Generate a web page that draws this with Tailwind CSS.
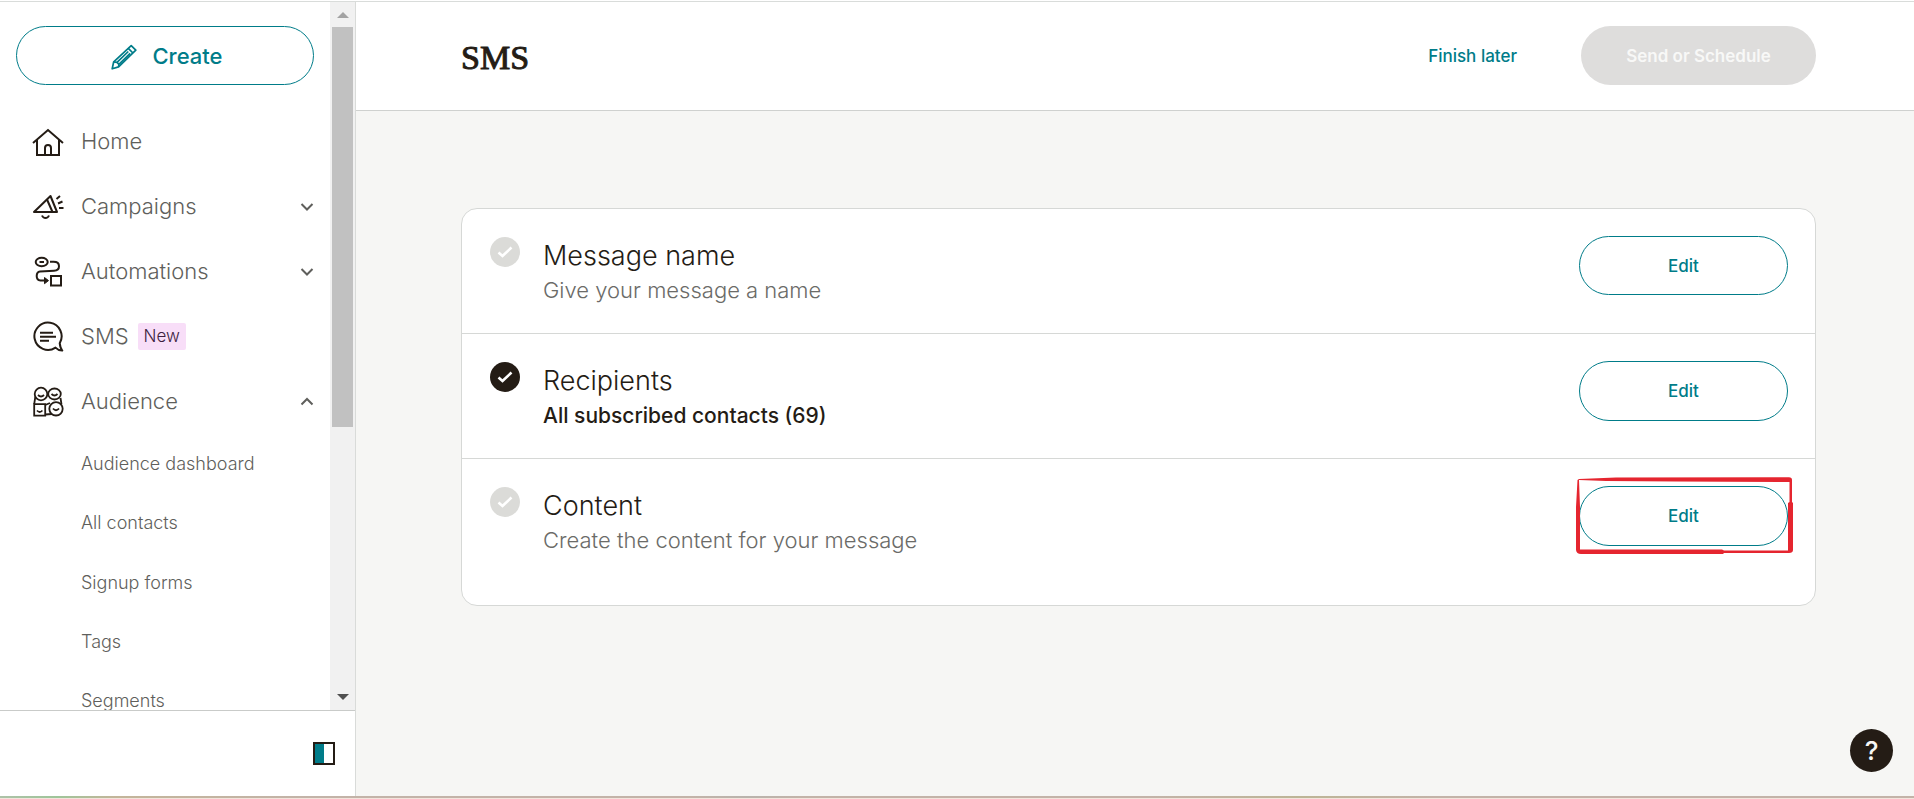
<!DOCTYPE html>
<html lang="en">
<head>
<meta charset="utf-8">
<meta name="viewport" content="width=device-width, initial-scale=1">
<title>SMS</title>
<script src="https://cdn.jsdelivr.net/npm/@tailwindcss/browser@4"></script>
</head>
<body class="flex h-screen flex-col overflow-hidden bg-white font-['Inter','Liberation_Sans',sans-serif] text-[#241c15]">
<div class="mt-px flex min-h-0 flex-1 border-t border-[#d9dcda]">

  <aside class="flex w-[356px] shrink-0 flex-col border-r border-[#d9dbd9]">
    <div class="flex min-h-0 flex-1">
      <div class="min-w-0 flex-1 overflow-hidden pt-6 pr-4 pl-4">
        <button type="button" class="flex h-[59px] w-full items-center justify-center gap-[15px] rounded-full border border-[#007c89] pt-0.5 pl-1 text-[22px] font-medium text-[#007c89]">
          <svg class="size-[26px]" viewBox="0 0 26 26" fill="none" stroke="currentColor" stroke-width="1.7" stroke-linejoin="round"><path d="M1.2 24.8 2.7 17.8 20.2 1.6 24.8 6.2 7.6 22.9Z"/><path d="M17.3 4.3 21.9 9M6 18.4 17.3 7.5M7.9 20.3 19.2 9.4M2.7 17.8 6 18.4 7.9 20.3 7.6 22.9"/></svg>
          Create
        </button>
        <nav class="mt-6 text-[22px] font-light text-[#5f5f5c]">
          <ul class="flex flex-col">
            <li><a href="#" class="flex h-[65px] items-center gap-[17px] pl-4">
              <svg class="size-8 shrink-0 text-[#241c15]" viewBox="0 0 32 32" fill="none" stroke="currentColor" stroke-width="2"><path d="M1 17 16 4 31 17M5 14V29H27V14M13 29V22Q13 19 16 19T19 22V29"/></svg>
              Home</a></li>
            <li><a href="#" class="flex h-[65px] items-center gap-[17px] pl-4">
              <svg class="size-8 shrink-0 text-[#241c15]" viewBox="0 0 32 32" fill="none" stroke="currentColor" stroke-width="2" stroke-linejoin="round"><path d="M2 21 18.5 5 25 21Z"/><path d="M15 8.5 20.5 21M10 24.5Q11 27 13.5 27T17 24.5M24.5 8 28 5M26 12.5 30.5 10.5M27 17H31.5"/></svg>
              <span class="flex-1">Campaigns</span>
              <svg class="h-4 w-3.5" viewBox="0 0 14 16" fill="none" stroke="currentColor" stroke-width="2"><path d="M1.5 5 7 10.500 12.500 5"/></svg></a></li>
            <li><a href="#" class="flex h-[65px] items-center gap-[17px] pl-4">
              <svg class="size-8 shrink-0 text-[#241c15]" viewBox="0 0 32 32" fill="none" stroke="currentColor" stroke-width="2"><ellipse cx="9.700" cy="6" rx="6" ry="4.200"/><path d="M7.500 6H12M18 5.800H21.500Q27 5.800 27 10.200T22 14.700L8 15.400Q4.700 15.800 4.700 20T8.500 24.600H13M19 20H29V29.400H19Z"/><path d="M12.500 21.500 16.500 24.600 12.500 27.700Z" fill="currentColor" stroke-width="1"/></svg>
              <span class="flex-1">Automations</span>
              <svg class="h-4 w-3.5" viewBox="0 0 14 16" fill="none" stroke="currentColor" stroke-width="2"><path d="M1.500 5 7 10.500 12.500 5"/></svg></a></li>
            <li><a href="#" class="flex h-[65px] items-center gap-[17px] pl-4">
              <svg class="size-8 shrink-0 text-[#241c15]" viewBox="0 0 32 32" fill="none" stroke="currentColor" stroke-width="2" stroke-linejoin="round"><path d="M23.500 26.600A13.600 13.600 0 1 1 27.700 22.200Q28.300 27.500 30.300 29.600 26.500 29.700 23.500 26.600Z"/><path d="M8 11.700H21M8 15.700H24M8 19.700H17"/></svg>
              <span>SMS</span><span class="-ml-2 rounded-[2px] bg-[#f8def8] px-1.5 text-[17px] leading-[27px] text-[#3d1f3f]">New</span></a></li>
            <li><a href="#" class="flex h-[65px] items-center gap-[17px] pl-4">
              <svg class="size-8 shrink-0 text-[#241c15]" viewBox="0 0 32 32" fill="none" stroke="currentColor" stroke-width="1.800"><circle cx="9" cy="8" r="6.300"/><ellipse cx="22.500" cy="8" rx="6.300" ry="5.500"/><path d="M2.200 18.200H13.200V29.600H2.200Z"/><circle cx="24" cy="22.800" r="6.700"/><path d="M3.300 11 2.200 18.200M28.500 12 29.500 18.500M13.200 28.500 20 28M13.200 19 18 17M6 9Q9 12 12 9M19.500 8Q22.500 11 25.500 8M5 24.500Q7.700 27.500 10.400 24.500M21 22.500Q24 26 27 22.500"/></svg>
              <span class="flex-1">Audience</span>
              <svg class="h-4 w-3.5" viewBox="0 0 14 16" fill="none" stroke="currentColor" stroke-width="2"><path d="M1.500 10.500 7 5 12.500 10.500"/></svg></a>
              <ul class="text-[18px]">
                <li><a href="#" class="flex h-[59px] items-center pl-[65px]">Audience dashboard</a></li>
                <li><a href="#" class="flex h-[59px] items-center pl-[65px]">All contacts</a></li>
                <li><a href="#" class="flex h-[60px] items-center pl-[65px]">Signup forms</a></li>
                <li><a href="#" class="flex h-[59px] items-center pl-[65px]">Tags</a></li>
                <li><a href="#" class="flex h-[59px] items-center pl-[65px]">Segments</a></li>
              </ul>
            </li>
          </ul>
        </nav>
      </div>
      <div class="flex w-[25px] flex-col items-center bg-[#f1f1f1]" aria-hidden="true">
        <svg class="h-[25px] w-3 text-[#a3a3a3]" viewBox="0 0 12 25" fill="currentColor"><path d="M0 16 6 10 12 16Z"/></svg>
        <div class="h-[400px] w-[21px] bg-[#c1c1c1]"></div>
        <svg class="mt-auto h-[25px] w-3 text-[#505050]" viewBox="0 0 12 25" fill="currentColor"><path d="M0 9 6 15 12 9Z"/></svg>
      </div>
    </div>
    <div class="flex h-[86px] items-center justify-end border-t border-[#c9cbc9] pr-5">
      <button type="button" aria-label="Collapse navigation" class="flex h-[23px] w-[22px] border-2 border-[#241c15] bg-white"><span class="h-full w-1/2 bg-[#007c89]"></span></button>
    </div>
  </aside>

  <div class="flex min-w-0 flex-1 flex-col bg-[#f6f6f4]">
    <header class="flex h-[109px] shrink-0 items-center border-b border-[#cfd1cf] bg-white pr-[98px] pb-0.5 pl-[105px]">
      <h1 class="flex-1 pt-1 font-['Liberation_Serif',serif] text-[34px] [-webkit-text-stroke:1px_#241c15]">SMS</h1>
      <a href="#" class="mr-16 pt-1 text-[17px] font-medium text-[#007c89]">Finish later</a>
      <button type="button" disabled class="h-[59px] w-[235px] rounded-full bg-[#dedddc] pt-1 text-[17px] font-semibold text-[#f8f8f7]">Send or Schedule</button>
    </header>
    <main class="relative flex-1 pt-[97px] pr-[98px] pl-[105px]">
      <div class="divide-y divide-[#d6d8d6] overflow-hidden rounded-2xl border border-[#d6d8d6] bg-white">
        <section class="flex h-[125px] items-start pt-[27px] pr-[27px] pl-7">
          <svg class="mt-px size-[30px]" viewBox="0 0 30 30"><circle cx="15" cy="15" r="15" fill="#dbdbd8"/><path d="M8.500 15.500 12.500 19 21.500 10.500" fill="none" stroke="#fff" stroke-width="2.600"/></svg>
          <div class="ml-[23px] flex-1"><h2 class="text-[27px] leading-10 font-light">Message name</h2><p class="text-[22px] leading-7 font-light text-[#6b6b68]">Give your message a name</p></div>
          <button type="button" class="h-[59px] w-[209px] rounded-full border border-[#007c89] pt-0.5 text-[17px] font-medium text-[#007c89]">Edit</button>
        </section>
        <section class="flex h-[125px] items-start pt-[27px] pr-[27px] pl-7">
          <svg class="mt-px size-[30px]" viewBox="0 0 30 30"><circle cx="15" cy="15" r="15" fill="#241c15"/><path d="M8.500 15.500 12.500 19 21.500 10.500" fill="none" stroke="#fff" stroke-width="2.600"/></svg>
          <div class="ml-[23px] flex-1"><h2 class="text-[27px] leading-10 font-light">Recipients</h2><p class="text-[21px] leading-[30px] font-medium">All subscribed contacts (69)</p></div>
          <button type="button" class="h-[60px] w-[209px] rounded-full border border-[#007c89] pt-0.5 text-[17px] font-medium text-[#007c89]">Edit</button>
        </section>
        <section class="flex h-[146px] items-start pt-[27px] pr-[27px] pl-7">
          <svg class="mt-px size-[30px]" viewBox="0 0 30 30"><circle cx="15" cy="15" r="15" fill="#dbdbd8"/><path d="M8.500 15.500 12.500 19 21.500 10.500" fill="none" stroke="#fff" stroke-width="2.600"/></svg>
          <div class="ml-[23px] flex-1"><h2 class="text-[27px] leading-10 font-light">Content</h2><p class="text-[22px] leading-7 font-light text-[#6b6b68]">Create the content for your message</p></div>
          <div class="relative">
            <button type="button" class="h-[60px] w-[209px] rounded-full border border-[#007c89] pt-0.5 text-[17px] font-medium text-[#007c89]">Edit</button>
            <svg class="pointer-events-none absolute -top-[9px] -left-[3px] h-[77px] w-[217px]" viewBox="0 0 217 77" fill="#e5252f" aria-hidden="true">
              <path d="M3 2 40 0.500 213 0.300Q216 0.500 216 3V25L217 26V73Q217 76 213 76H148L147 77H5Q0.500 77 0 73V30L1.500 3ZM3 3 4 30V72.500H146L148 73.500H212V26L213.500 25V5L100 4.500 30 4Z" fill-rule="evenodd"/>
            </svg>
          </div>
        </section>
      </div>
      <button type="button" aria-label="Help" class="absolute right-[21px] bottom-[24px] flex size-[43px] items-center justify-center rounded-full bg-[#241c15] text-[26px] font-medium text-[#f6f6f4]">?</button>
    </main>
  </div>
</div>
<div class="h-[3px] shrink-0 border-b border-[#f3e4dc] bg-[linear-gradient(to_right,#adc2a8,#9fc59a_3%,#c3b59a_6%,#c3b3a8_16%,#c3b3a8_36%,#b9b3ac_39%,#c3b3a8_42%,#c3b3a8_60%,#bdb596_68%,#c3b3a8_75%,#c3b3a8)]"></div>
</body>
</html>
